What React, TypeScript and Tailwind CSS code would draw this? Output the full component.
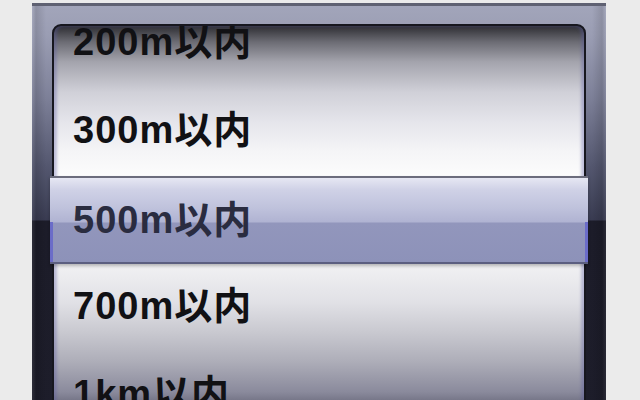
const rows = ["200m以内", "300m以内", "500m以内", "700m以内", "1km以内"];

const textFont = { fontFamily: '"Liberation Sans", "Noto Sans CJK JP", sans-serif' };

export default function App() {
  return (
    <div className="w-[640px] h-[400px] bg-[#ebebeb] overflow-hidden">
      {/* picker frame */}
      <div className="relative ml-[32px] mt-[3px] w-[574px] h-[440px] border-t-[3px] border-[#5f6172] bg-[linear-gradient(to_bottom,#a2a5ba_0px,#9a9db3_30px,#7e8199_90px,#54576f_160px,#393b51_214px,#1c1c29_215px,#1d1d2a_440px)]">
        {/* side shading */}
        <div className="absolute inset-0 bg-[linear-gradient(to_right,rgba(255,255,255,0.08)_0px,rgba(0,0,0,0.12)_4px,rgba(0,0,0,0)_14px,rgba(0,0,0,0)_560px,rgba(0,0,0,0.12)_570px,rgba(255,255,255,0.06)_574px)]" />

        {/* wheel */}
        <div className="relative mx-[20px] mt-[18px] h-[392px] rounded-[9px] border-2 border-[#17171f] overflow-hidden bg-[linear-gradient(to_bottom,#2e2e33_0px,#6c6c74_16px,#a4a4ad_36px,#d0d0d8_66px,#e5e5eb_96px,#f5f5f7_126px,#fcfcfc_151px,#fbfbfb_200px,#f0f0f2_241px,#e1e1e6_276px,#c9c9d0_306px,#adadb8_336px,#8a8a9c_366px,#6e6e80_378px,#3c3c48_392px)] shadow-[inset_3px_0_3px_rgba(90,90,160,0.35),inset_-3px_0_3px_rgba(90,90,160,0.35)]">
          <div className="flex flex-col mt-[-28px]">
            {rows.map((r) => (
              <div
                key={r}
                className="h-[88px] flex items-center pl-[19px] text-[38px] font-bold tracking-[1px] text-[#111114] leading-none"
                style={textFont}
              >
                {r}
              </div>
            ))}
          </div>
        </div>

        {/* selection bar */}
        <div className="absolute left-[18px] right-[18px] top-[170px] h-[88px] border-t-2 border-[#6b6c7c] border-b-2 border-b-[#5c5f80] bg-[linear-gradient(to_bottom,#e6e7f3_0px,#cfd1e6_12px,#bfc2dc_30px,#b0b3d2_44px,#9296bc_45px,#8d92b9_84px,#a3a6c8_86px)] shadow-[0_2px_3px_rgba(0,0,0,0.25)] overflow-hidden">
          <div className="absolute left-0 top-[44px] bottom-0 w-[3px] bg-[#6b6cc8]" />
          <div className="absolute right-0 top-[44px] bottom-0 w-[3px] bg-[#6b6cc8]" />
          <div
            className="h-full flex items-center pl-[23px] text-[38px] font-bold tracking-[1px] text-[#2a2c40] leading-none"
            style={textFont}
          >
            500m以内
          </div>
        </div>
      </div>
    </div>
  );
}
